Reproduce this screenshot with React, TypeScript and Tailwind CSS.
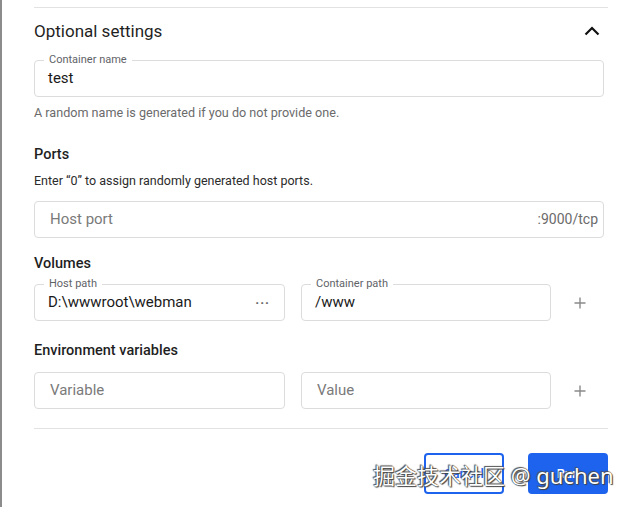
import { ReactNode } from 'react';

function Field({
  label,
  value,
  placeholder,
  suffix,
  className = '',
}: {
  label?: string;
  value?: string;
  placeholder?: string;
  suffix?: ReactNode;
  className?: string;
}) {
  return (
    <div className={`relative flex h-[37px] shrink-0 items-center rounded-[4px] border border-[#dcdcdc] ${className}`}>
      {label && (
        <span className="absolute -top-[8px] left-[9px] bg-white px-[5px] text-[11px] leading-[14px] text-[#5f6368]">
          {label}
        </span>
      )}
      {value ? (
        <span className="flex-1 pl-[13px] text-[15px] text-[#1a1a1a]">{value}</span>
      ) : (
        <span className="flex-1 pl-[15px] text-[15px] text-[#7a7a7a]">{placeholder}</span>
      )}
      {suffix}
    </div>
  );
}

function Plus() {
  return (
    <div className="flex flex-1 items-center justify-end pr-[18px]">
      <svg width="12" height="12" viewBox="0 0 12 12" fill="none" stroke="#8a8a8a" strokeWidth="1.4">
        <path d="M6 0.5v11M0.5 6h11" />
      </svg>
    </div>
  );
}

export default function App() {
  return (
    <div className="relative h-[507px] w-[632px] overflow-hidden border-l-2 border-[#8c8c8c] bg-white font-['Roboto',sans-serif]">
      <div className="pl-[32px] pr-[24px] pt-[7px]">
        <div className="h-px bg-[#e2e2e2]" />

        <div className="mt-[12px] flex items-center justify-between pr-[4px]">
          <h2 className="text-[17px] leading-[22px] text-[#1f1f1f]">Optional settings</h2>
          <svg width="16" height="10" viewBox="0 0 16 10" fill="none" stroke="#111" strokeWidth="2.2" className="mr-[4px]">
            <path d="M1.5 8.5L8 2l6.5 6.5" />
          </svg>
        </div>

        <div className="pr-[4px]">
          <Field className="mt-[18px]" label="Container name" value="test" />
          <p className="mt-[8px] text-[12.6px] leading-[16px] text-[#6b6b6b]">
            A random name is generated if you do not provide one.
          </p>

          <h3 className="mt-[25px] text-[14.5px] font-medium leading-[18px] text-[#1f1f1f]">Ports</h3>
          <p className="mt-[9px] text-[12.5px] leading-[16px] text-[#2b2b2b]">
            Enter “0” to assign randomly generated host ports.
          </p>
          <Field
            className="mt-[12px]"
            placeholder="Host port"
            suffix={<span className="pr-[5px] text-[14px] text-[#6b6b6b]">:9000/tcp</span>}
          />

          <h3 className="mt-[17px] text-[14.5px] font-medium leading-[18px] text-[#1f1f1f]">Volumes</h3>
          <div className="mt-[11px] flex">
            <Field
              className="w-[251px]"
              label="Host path"
              value="D:\wwwroot\webman"
              suffix={<span className="pr-[14px] text-[13px] font-bold tracking-[1px] text-[#666]">···</span>}
            />
            <Field className="ml-[16px] w-[250px]" label="Container path" value="/www" />
            <Plus />
          </div>

          <h3 className="mt-[21px] text-[14.5px] font-medium leading-[18px] text-[#1f1f1f]">Environment variables</h3>
          <div className="mt-[12px] flex">
            <Field className="w-[251px]" placeholder="Variable" />
            <Field className="ml-[16px] w-[250px]" placeholder="Value" />
            <Plus />
          </div>
        </div>

        <div className="mt-[19px] h-px bg-[#e2e2e2]" />

        <div className="mt-[24px] flex justify-end gap-[24px]">
          <button className="h-[41px] w-[80px] rounded-[4px] border-2 border-[#1d63ed] text-[13px] font-medium text-[#1d63ed]">
            Cancel
          </button>
          <button className="h-[41px] w-[80px] rounded-[4px] bg-[#1d63ed] text-[13px] font-medium text-white">
            Run
          </button>
        </div>
      </div>

      <div className="absolute left-[371px] top-[461px] whitespace-nowrap font-['Noto_Sans','Noto_Sans_CJK_SC',sans-serif] text-[22px] leading-[28px] text-white [text-shadow:0_0_1px_#222,1px_1px_1px_#444,-1px_-1px_1px_#555]">
        掘金技术社区 @ guchen
      </div>
    </div>
  );
}
